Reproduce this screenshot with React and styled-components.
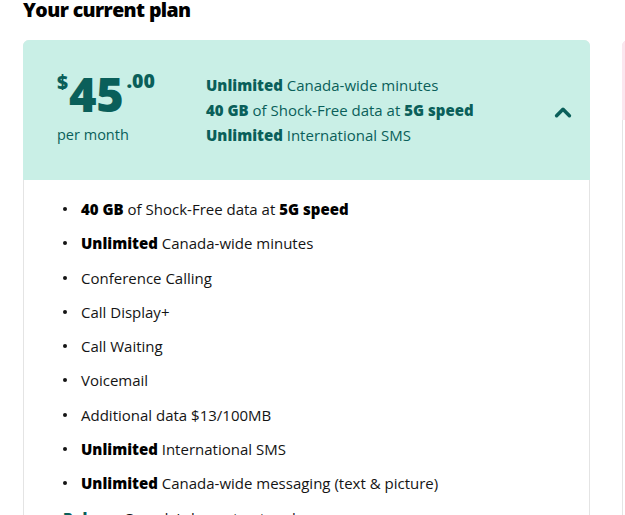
import React from 'react'
import styled, { createGlobalStyle } from 'styled-components'

const Global = createGlobalStyle`
  html, body {
    margin: 0;
    padding: 0;
    background: #fff;
    overflow: hidden;
  }
  body {
    font-family: "Open Sans", Lato, sans-serif;
    color: #141414;
  }
`

const Page = styled.div`
  width: 625px;
  height: 515px;
  overflow: hidden;
  padding: 0 0 0 23px;
  box-sizing: border-box;
`

const Title = styled.h2`
  margin: -4px 0 0;
  font-size: 19.5px;
  line-height: 27px;
  font-weight: 800;
  color: #000;
  letter-spacing: -0.6px;
`

const Cards = styled.div`
  display: flex;
  gap: 32px;
  margin-top: 17px;
`

const Card = styled.div`
  flex: 0 0 567px;
  border: 1px solid #e4e4e4;
  border-radius: 6px;
  height: 600px;
  box-sizing: border-box;
`

const Header = styled.div`
  height: ${p => p.$h || 140}px;
  margin: -1px -1px 0;
  background: ${p => p.$bg};
  border-radius: 6px 6px 0 0;
  display: flex;
  align-items: center;
  padding: 0 16px 0 34px;
  color: #0a5f5a;
`

const PriceBlock = styled.div`
  width: 149px;
  flex: 0 0 149px;
  margin-top: -6px;
`

const Price = styled.div`
  display: flex;
  align-items: flex-start;
  font-weight: 800;
  line-height: 1;
`

const Dollar = styled.span`
  font-size: 19px;
  margin-top: 2px;
`

const Amount = styled.span`
  font-size: 47px;
  letter-spacing: -0.3px;
  margin: 0 3px 0 1px;
`

const Cents = styled.span`
  font-size: 19.5px;
  margin-top: 0;
`

const PerMonth = styled.div`
  font-size: 14.5px;
  margin-top: 7px;
`

const Highlights = styled.div`
  flex: 1;
  font-size: 15px;
  line-height: 25px;
`

const Line = styled.div`
  b {
    font-weight: 800;
  }
`

const Chevron = styled.svg`
  width: 22px;
  height: 22px;
  margin-top: 6px;
`

const List = styled.ul`
  list-style: none;
  margin: 0;
  padding: 12px 0 0 39px;
`

const Item = styled.li`
  position: relative;
  font-size: 15px;
  line-height: 34.3px;
  padding-left: ${p => (p.$accent ? 0 : 18)}px;
  color: ${p => (p.$accent ? '#0a5f5a' : '#141414')};
  &::before {
    content: '';
    position: absolute;
    left: 0;
    top: 15px;
    width: 4px;
    height: 4px;
    border-radius: 50%;
    background: #141414;
    display: ${p => (p.$accent ? 'none' : 'block')};
  }
  b {
    font-weight: 800;
    color: ${p => (p.$accent ? '#0a5f5a' : '#000')};
  }
`

const Plain = styled.span`
  color: #141414;
`

const features = [
  [['40 GB', true], [' of Shock-Free data at '], ['5G speed', true]],
  [['Unlimited', true], [' Canada-wide minutes']],
  [['Conference Calling']],
  [['Call Display+']],
  [['Call Waiting']],
  [['Voicemail']],
  [['Additional data $13/100MB']],
  [['Unlimited', true], [' International SMS']],
  [['Unlimited', true], [' Canada-wide messaging (text & picture)']],
]

const renderParts = parts =>
  parts.map(([t, bold], i) => (bold ? <b key={i}>{t}</b> : <span key={i}>{t}</span>))

export default function App() {
  return (
    <>
      <Global />
      <Page>
        <Title>Your current plan</Title>
        <Cards>
          <Card>
            <Header $bg="#c9efe6">
              <PriceBlock>
                <Price>
                  <Dollar>$</Dollar>
                  <Amount>45</Amount>
                  <Cents>.00</Cents>
                </Price>
                <PerMonth>per month</PerMonth>
              </PriceBlock>
              <Highlights>
                <Line><b>Unlimited</b> Canada-wide minutes</Line>
                <Line><b>40 GB</b> of Shock-Free data at <b>5G speed</b></Line>
                <Line><b>Unlimited</b> International SMS</Line>
              </Highlights>
              <Chevron viewBox="0 0 24 24" fill="none" stroke="#0a5f5a" strokeWidth="3.8" strokeLinecap="round" strokeLinejoin="round">
                <path d="M5 15l7-7 7 7" />
              </Chevron>
            </Header>
            <List>
              {features.map((parts, i) => (
                <Item key={i}>{renderParts(parts)}</Item>
              ))}
              <Item $accent>
                <b>Rely on</b> <Plain>Canada's largest network</Plain>
              </Item>
            </List>
          </Card>
          <Card>
            <Header $bg="#fbe6ee" $h={80} />
          </Card>
        </Cards>
      </Page>
    </>
  )
}
